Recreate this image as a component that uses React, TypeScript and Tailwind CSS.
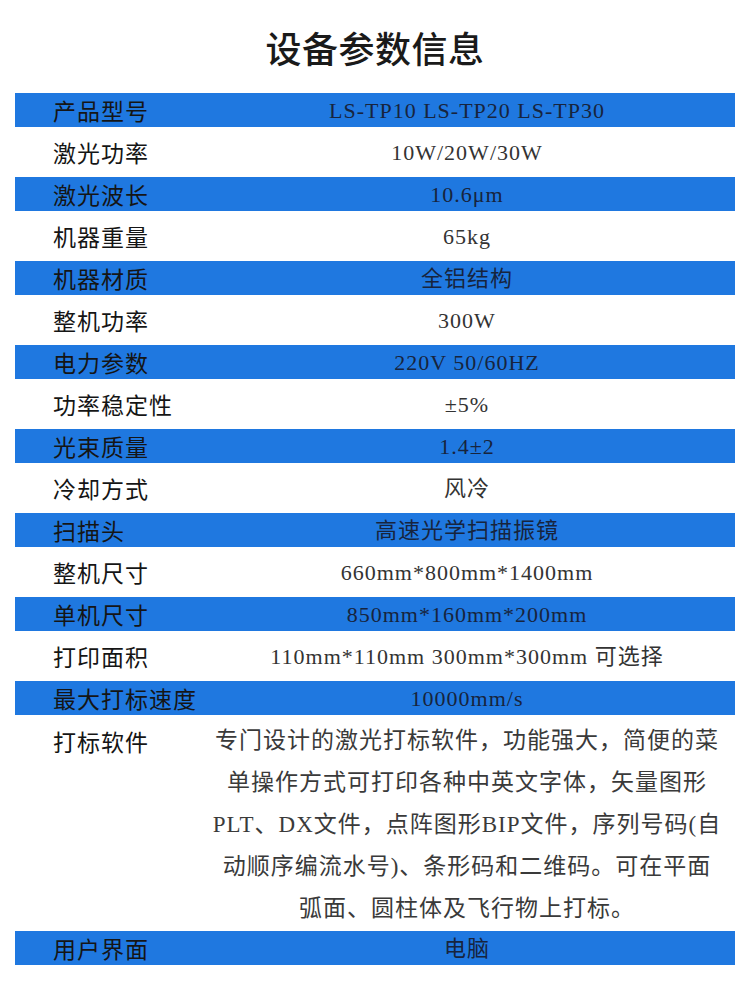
const rows: { label: string; value: string }[] = [
  { label: "产品型号", value: "LS-TP10 LS-TP20 LS-TP30" },
  { label: "激光功率", value: "10W/20W/30W" },
  { label: "激光波长", value: "10.6μm" },
  { label: "机器重量", value: "65kg" },
  { label: "机器材质", value: "全铝结构" },
  { label: "整机功率", value: "300W" },
  { label: "电力参数", value: "220V 50/60HZ" },
  { label: "功率稳定性", value: "±5%" },
  { label: "光束质量", value: "1.4±2" },
  { label: "冷却方式", value: "风冷" },
  { label: "扫描头", value: "高速光学扫描振镜" },
  { label: "整机尺寸", value: "660mm*800mm*1400mm" },
  { label: "单机尺寸", value: "850mm*160mm*200mm" },
  { label: "打印面积", value: "110mm*110mm 300mm*300mm 可选择" },
  { label: "最大打标速度", value: "10000mm/s" },
]

// software description, broken the same way as the picture
const softwareLines = [
  "专门设计的激光打标软件，功能强大，简便的菜",
  "单操作方式可打印各种中英文字体，矢量图形",
  "PLT、DX文件，点阵图形BIP文件，序列号码(自",
  "动顺序编流水号)、条形码和二维码。可在平面",
  "弧面、圆柱体及飞行物上打标。",
]

const labelCls =
  "w-[184px] shrink-0 pl-[38px] text-[23px] tracking-[1px] text-[#151515] font-['Noto_Sans_CJK_SC',sans-serif]"
const valueCls =
  "flex-1 text-center text-[22px] tracking-[1px] font-['Liberation_Serif','Noto_Sans_CJK_SC',serif]"

function Row({ label, value, blue }: { label: string; value: string; blue: boolean }) {
  return (
    <div className={`flex items-center ${blue ? "h-[34px] bg-[#1f78e0]" : "h-[50px] bg-white"}`}>
      <div className={labelCls}>{label}</div>
      <div className={`${valueCls} ${blue ? "text-[#17243d]" : "text-[#333333]"}`}>{value}</div>
    </div>
  )
}

export default function App() {
  return (
    <div className="w-[750px] h-[999px] bg-white">
      <div className="flex h-[93px] items-center justify-center">
        <h1 className="text-[36px] font-medium tracking-[0.5px] text-[#1a1a1a] font-['Noto_Sans_CJK_SC',sans-serif]">
          设备参数信息
        </h1>
      </div>

      <div className="mx-[15px]">
        {rows.map((r, i) => (
          <Row key={r.label} label={r.label} value={r.value} blue={i % 2 === 0} />
        ))}

        <div className="flex items-start bg-white h-[216px] pt-[5px]">
          <div className={`${labelCls} leading-[42px]`}>打标软件</div>
          <div className="flex-1 text-center text-[23px] tracking-[1px] leading-[42px] text-[#3a3a3a] font-['Liberation_Serif','Noto_Sans_CJK_SC',serif]">
            {softwareLines.map((line) => (
              <div key={line} className="whitespace-nowrap">
                {line}
              </div>
            ))}
          </div>
        </div>

        <Row label="用户界面" value="电脑" blue />
      </div>
    </div>
  )
}
